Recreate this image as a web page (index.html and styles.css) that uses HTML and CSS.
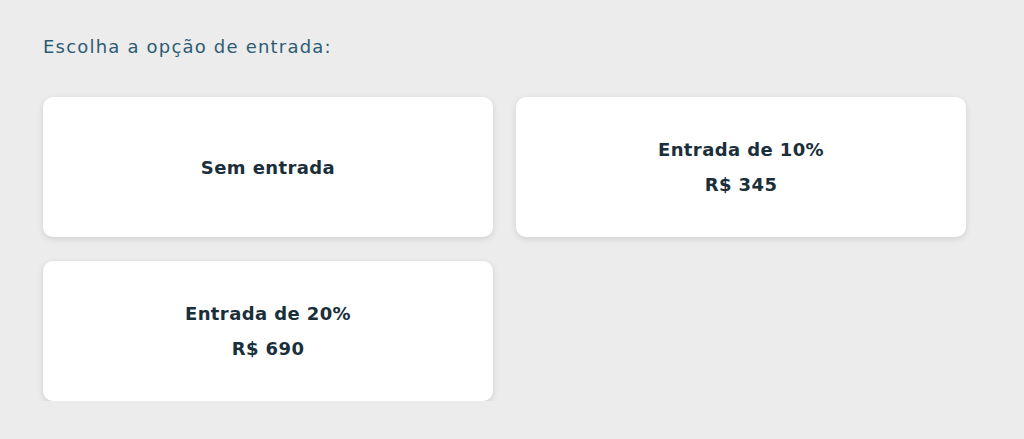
FILE: index.html
```html
<!DOCTYPE html>
<html lang="pt-BR">
<head>
<meta charset="utf-8">
<link rel="stylesheet" href="styles.css">
</head>
<body>
<main class="page">
  <h2 class="title">Escolha a opção de entrada:</h2>
  <div class="options">
    <div class="card"><p class="label">Sem entrada</p></div>
    <div class="card"><p class="label">Entrada de 10%</p><p class="value">R$ 345</p></div>
    <div class="card"><p class="label">Entrada de 20%</p><p class="value">R$ 690</p></div>
  </div>
</main>
</body>
</html>
```
FILE: styles.css
```css
html, body {
  margin: 0;
  padding: 0;
  background: #ececec;
}
.page {
  padding: 36px 0 0 43px;
  width: 923px;
  font-family: "DejaVu Sans", "Noto Sans", sans-serif;
}
.title {
  margin: 0 0 39px;
  font-size: 18px;
  line-height: 22px;
  font-weight: 400;
  letter-spacing: 1.2px;
  color: #2c5c74;
}
.options {
  display: grid;
  grid-template-columns: 450px 450px;
  column-gap: 23px;
  row-gap: 24px;
}
.card {
  height: 140px;
  background: #fff;
  border-radius: 10px;
  box-shadow: 0 2px 6px rgba(0,0,0,0.12);
  display: flex;
  flex-direction: column;
  align-items: center;
  justify-content: center;
  gap: 12px;
  color: #1b2f3b;
}
.label, .value {
  margin: 0;
  font-size: 18px;
  line-height: 23px;
  font-weight: 700;
  letter-spacing: 0.4px;
}
```
